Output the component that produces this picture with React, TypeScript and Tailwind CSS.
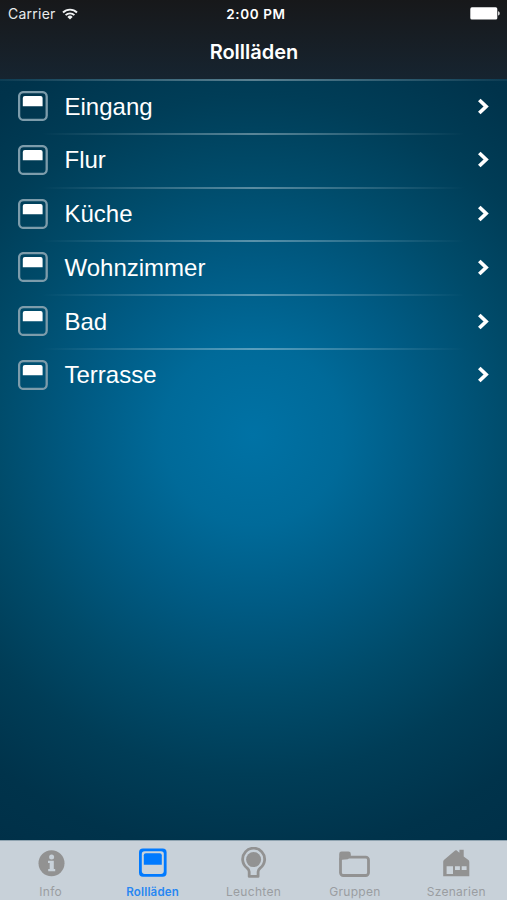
import type { ReactNode } from 'react'

const rooms = ['Eingang', 'Flur', 'Küche', 'Wohnzimmer', 'Bad', 'Terrasse']

function WifiIcon() {
  return (
    <svg width="16" height="12" viewBox="0 0 16 12" fill="none" stroke="#f1f3f4" strokeWidth="1.9">
      <path d="M1 4.5a10 10 0 0 1 14 0" />
      <path d="M3.6 7.2a6.2 6.2 0 0 1 8.8 0" />
      <path d="M8 11.5 5.4 8.9a3.7 3.7 0 0 1 5.2 0Z" fill="#f1f3f4" stroke="none" />
    </svg>
  )
}

function BatteryIcon() {
  return (
    <svg width="30" height="13" viewBox="0 0 30 13" fill="#fff">
      <rect x="0.3" y="0.3" width="27" height="12.2" rx="1.6" />
      <path d="M28.2 4.3c1.9.4 1.9 3.8 0 4.2Z" />
    </svg>
  )
}

function ShutterIcon() {
  return (
    <svg width="30" height="30" viewBox="0 0 30 30" fill="none">
      <rect x="1.1" y="1.1" width="27.6" height="27.8" rx="4.5" stroke="#7d9cab" strokeWidth="2.3" />
      <path d="M4.8 15.2V7a2 2 0 0 1 2-2h15.8a2 2 0 0 1 2 2v8.2Z" fill="#fff" />
    </svg>
  )
}

function ChevronIcon() {
  return (
    <svg width="13" height="17" viewBox="0 0 13 17" fill="none" stroke="#fff" strokeWidth="3.7">
      <path d="m2.3 2 6.8 6.5L2.3 15" />
    </svg>
  )
}

function InfoIcon() {
  return (
    <svg width="32" height="32" viewBox="0 0 32 32">
      <circle cx="16.5" cy="16.2" r="13" fill="#929292" />
      <circle cx="16.6" cy="10" r="2.5" fill="#c8d1d9" />
      <path d="M13 13.8h5.8V22h1.4v2.2h-7V22h1.5v-6H13Z" fill="#c8d1d9" />
    </svg>
  )
}

function TabShutterIcon() {
  return (
    <svg width="32" height="32" viewBox="0 0 32 32" fill="none">
      <rect x="3" y="1.4" width="27.6" height="28.4" rx="4" fill="#007aff" />
      <rect x="5.8" y="4.3" width="22" height="22.6" rx="2.8" fill="#cbd3da" />
      <path d="M7.8 17.8V8.3a2 2 0 0 1 2-2h14a2 2 0 0 1 2 2v9.5Z" fill="#007aff" />
    </svg>
  )
}

function BulbIcon() {
  return (
    <svg width="32" height="32" viewBox="0 0 32 32" fill="none">
      <path
        d="M11.2 29.4v-4.6c0-1.6-.7-2.6-2-3.7a11 11 0 1 1 12.9 0c-1.3 1.1-2 2.1-2 3.7v4.6Z"
        stroke="#929292"
        strokeWidth="2.8"
        strokeLinejoin="round"
      />
      <circle cx="15.6" cy="12.6" r="7.5" fill="#929292" />
    </svg>
  )
}

function FolderIcon() {
  return (
    <svg width="32" height="32" viewBox="0 0 32 32" fill="none">
      <path d="M.2 13V7a2.4 2.4 0 0 1 2.4-2.4h6.8A2.4 2.4 0 0 1 11.8 7v2.3l-3 3Z" fill="#929292" />
      <rect x="1.5" y="10.1" width="28" height="18.4" rx="2.8" stroke="#929292" strokeWidth="2.8" />
    </svg>
  )
}

function HouseIcon() {
  return (
    <svg width="32" height="32" viewBox="0 0 32 32" fill="none">
      <path
        d="M3.2 29.2V15c0-1 .3-1.6 1-2.2l10.3-8.9c.8-.8 1.7-.9 2.5-.2l2.4 2V2.8h4.3v6.6l4.7 3.7c.6.5.9 1.1.9 2v14.1Z"
        fill="#929292"
      />
      <path d="M6.6 19.2H13V27H6.6ZM15 19.2h4.9v3.7H15ZM21.7 19.2h4.9v3.7h-4.9Z" fill="#cbd3da" />
    </svg>
  )
}

function Tab({ label, icon, active = false }: { label: string; icon: ReactNode; active?: boolean }) {
  return (
    <button
      className={
        active
          ? 'flex flex-1 flex-col items-center pt-[7px] text-[#2787f2]'
          : 'flex flex-1 flex-col items-center pt-[7px] text-[#9a9da1]'
      }
    >
      {icon}
      <span
        className={
          active
            ? 'mt-[6px] pl-px text-[11.5px] leading-[14px] font-semibold tracking-[0.2px]'
            : 'mt-[6px] text-[12px] leading-[14px] tracking-[0.3px]'
        }
      >
        {label}
      </span>
    </button>
  )
}

export default function App() {
  return (
    <div className="flex h-[900px] w-[507px] flex-col overflow-hidden bg-[radial-gradient(circle_at_253px_435px,#0072a5_0px,#006a99_90px,#005b84_170px,#004b6a_260px,#003d57_340px,#00334b_420px,#002f47_500px)] font-['Inter',sans-serif]">
      <header className="flex h-[79px] flex-col bg-linear-to-b from-[#17181a] to-[#162430] text-white">
        <div className="grid h-[27px] grid-cols-3 items-center pr-[7px] pl-[8px] text-[#e8ebed]">
          <div className="flex items-center gap-[6px] text-[14px] tracking-[0.25px]">
            Carrier
            <WifiIcon />
          </div>
          <div className="pt-px pl-[4px] text-center text-[13.5px] font-semibold tracking-[0.6px] text-white">
            2:00 PM
          </div>
          <div className="flex justify-end">
            <BatteryIcon />
          </div>
        </div>
        <h1 className="pt-[11px] pl-px text-center text-[20px] leading-[28px] font-semibold">
          Rollläden
        </h1>
      </header>

      <main className="flex-1">
        <div className="h-[2px] bg-linear-to-r from-white/5 via-white/35 to-white/5" />
        <ul>
          {rooms.map((room, i) => (
            <li key={room} className="flex h-[53.75px] flex-col">
              <div className="flex flex-1 items-center pr-[17px] pb-[1.5px] pl-[18px]">
                <ShutterIcon />
                <span className="flex-1 pt-[1px] pl-[16.5px] font-['Liberation_Sans',sans-serif] text-[24px] leading-[28px] text-white">
                  {room}
                </span>
                <ChevronIcon />
              </div>
              <div
                className={
                  i < rooms.length - 1
                    ? 'mx-[42px] h-[2px] bg-linear-to-r from-transparent via-white/35 to-transparent'
                    : 'h-[2px]'
                }
              />
            </li>
          ))}
        </ul>
      </main>

      <nav className="flex h-[60px] border-t border-[#8fa3b0] bg-[#c8d1d9] *:-mt-px">
        <Tab label="Info" icon={<InfoIcon />} />
        <Tab label="Rollläden" icon={<TabShutterIcon />} active />
        <Tab label="Leuchten" icon={<BulbIcon />} />
        <Tab label="Gruppen" icon={<FolderIcon />} />
        <Tab label="Szenarien" icon={<HouseIcon />} />
      </nav>
    </div>
  )
}
